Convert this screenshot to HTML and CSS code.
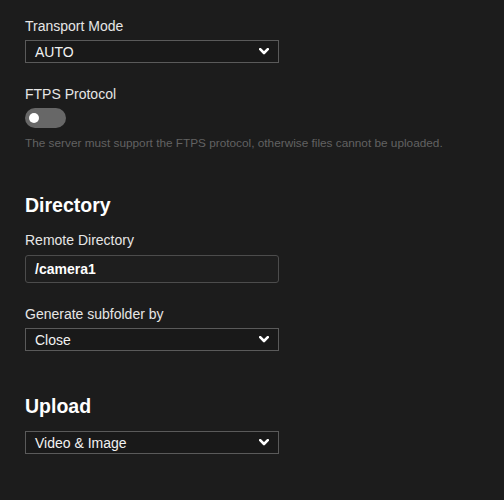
FILE: index.html
```html
<!DOCTYPE html>
<html lang="en">
<head>
<meta charset="utf-8">
<title>FTP Settings</title>
<link rel="stylesheet" href="styles.css">
</head>
<body>
<main class="page">
  <section class="section">
    <div class="field">
      <div class="field-label">Transport Mode</div>
      <div class="select">
        <span class="select-value">AUTO</span>
        <svg class="chevron" width="10" height="7" viewBox="0 0 10 7"><polyline points="1.2,1.2 5,5 8.8,1.2" fill="none" stroke="#fff" stroke-width="2.6" stroke-linecap="round" stroke-linejoin="round"/></svg>
      </div>
    </div>
    <div class="field">
      <div class="field-label">FTPS Protocol</div>
      <div class="toggle"><span class="knob"></span></div>
      <p class="hint">The server must support the FTPS protocol, otherwise files cannot be uploaded.</p>
    </div>
  </section>

  <section class="section">
    <h2 class="section-title">Directory</h2>
    <div class="field">
      <div class="field-label field-label-input">Remote Directory</div>
      <div class="input">/camera1</div>
    </div>
    <div class="field">
      <div class="field-label">Generate subfolder by</div>
      <div class="select">
        <span class="select-value">Close</span>
        <svg class="chevron" width="10" height="7" viewBox="0 0 10 7"><polyline points="1.2,1.2 5,5 8.8,1.2" fill="none" stroke="#fff" stroke-width="2.6" stroke-linecap="round" stroke-linejoin="round"/></svg>
      </div>
    </div>
  </section>

  <section class="section">
    <h2 class="section-title section-title-tight">Upload</h2>
    <div class="select">
      <span class="select-value">Video &amp; Image</span>
      <svg class="chevron" width="10" height="7" viewBox="0 0 10 7"><polyline points="1.2,1.2 5,5 8.8,1.2" fill="none" stroke="#fff" stroke-width="2.6" stroke-linecap="round" stroke-linejoin="round"/></svg>
    </div>
  </section>
</main>
</body>
</html>
```
FILE: styles.css
```css
html, body {
  margin: 0;
  padding: 0;
  background: #1c1c1c;
}
body {
  font-family: "Liberation Sans", Arial, sans-serif;
  color: #e8e8e8;
}
.page {
  padding: 18px 25px 20px 25px;
  width: 254px;
}
.section + .section {
  margin-top: 43px;
}
.section-title {
  margin: 0 0 15px 0;
  font-size: 19.5px;
  line-height: 24px;
  font-weight: bold;
  color: #ffffff;
}
.section-title-tight {
  margin-bottom: 13px;
}
.field + .field {
  margin-top: 23px;
}
.field-label {
  font-size: 14px;
  line-height: 16px;
  margin-bottom: 6px;
  color: #e6e6e6;
}
.field-label-input {
  margin-bottom: 7px;
}
.select {
  box-sizing: border-box;
  height: 23px;
  width: 254px;
  border: 1px solid #5a5a5a;
  background: #191919;
  display: flex;
  align-items: center;
  justify-content: space-between;
  padding: 0 9px 0 9px;
}
.select-value {
  font-size: 14px;
  line-height: 16px;
  color: #f2f2f2;
}
.chevron {
  display: block;
}
.input {
  box-sizing: border-box;
  height: 28px;
  width: 254px;
  border: 1px solid #4c4c4c;
  border-radius: 3px;
  background: #1e1e1e;
  display: flex;
  align-items: center;
  padding: 0 9px;
  font-size: 14px;
  font-weight: bold;
  color: #ffffff;
}
.toggle {
  box-sizing: border-box;
  width: 41px;
  height: 20px;
  border-radius: 10px;
  background: #676767;
  display: flex;
  align-items: center;
  padding-left: 4px;
}
.knob {
  width: 10px;
  height: 10px;
  border-radius: 50%;
  background: #ffffff;
}
.hint {
  margin: 8px 0 0 0;
  font-size: 11.8px;
  line-height: 14px;
  color: #626262;
  white-space: nowrap;
}
```
